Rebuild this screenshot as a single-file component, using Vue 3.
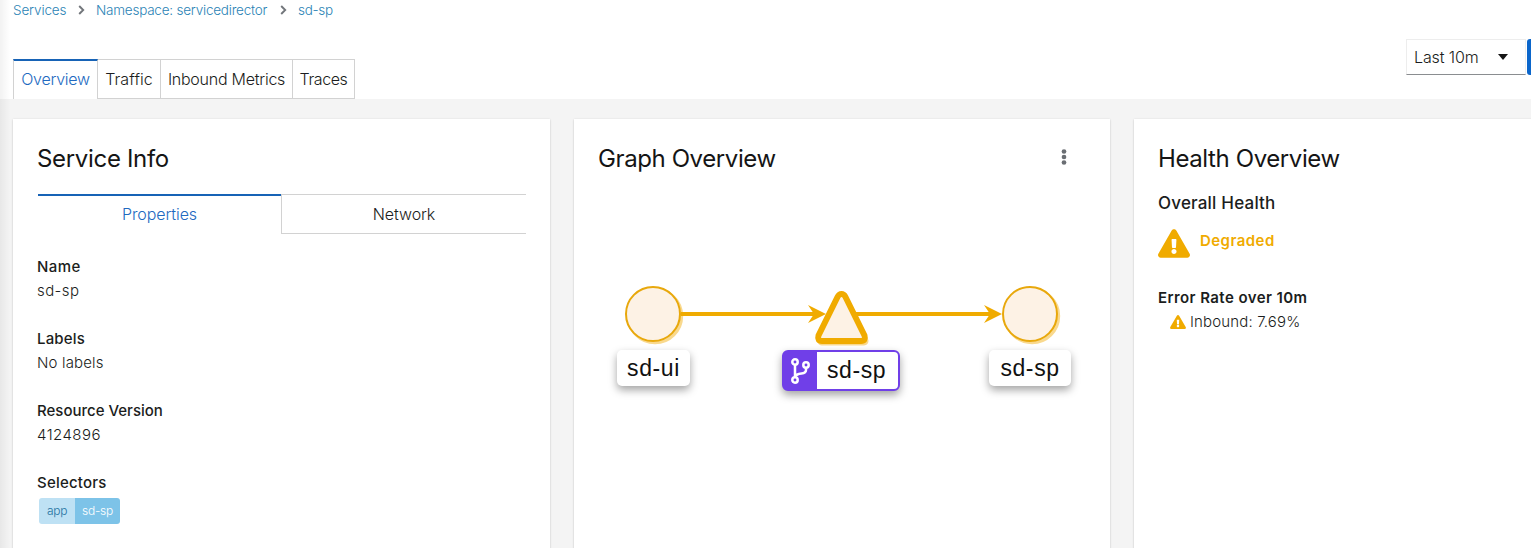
<script setup>
const properties = [
  { label: 'Name', value: 'sd-sp', id: 'name' },
  { label: 'Labels', value: 'No labels', id: 'labels' },
  { label: 'Resource Version', value: '4124896', id: 'version' },
]
const warning = 'M569.5 440C588 472 564.800 512 527.900 512H48.050c-36.940 0-59.999-40.055-41.577-71.987L246.423 23.985c18.467-32.009 64.720-31.951 83.154 0l239.940 416.027zM288 354c-25.405 0-46 20.595-46 46s20.595 46 46 46 46-20.595 46-46-20.595-46-46-46zm-43.673-165.346l7.418 136c.347 6.364 5.609 11.346 11.982 11.346h48.546c6.373 0 11.635-4.982 11.982-11.346l7.418-136c.375-6.874-5.098-12.654-11.982-12.654h-63.383c-6.884 0-12.356 5.780-11.981 12.654z'
</script>

<template>
  <div class="page">
    <header class="top">
      <nav class="crumbs">
        <a class="c1">Services</a>
        <svg class="chev" viewBox="0 0 7 10"><path d="M1.200 1 5.200 5 1.200 9" /></svg>
        <a class="c2">Namespace: servicedirector</a>
        <svg class="chev" viewBox="0 0 7 10"><path d="M1.200 1 5.200 5 1.200 9" /></svg>
        <a class="c3">sd-sp</a>
      </nav>
      <div class="bar">
        <div class="tabs">
          <button class="tab active w1"><span>Overview</span></button>
          <button class="tab w2"><span>Traffic</span></button>
          <button class="tab w3"><span>Inbound Metrics</span></button>
          <button class="tab w4"><span>Traces</span></button>
        </div>
        <div class="controls">
          <div class="select"><span>Last 10m</span><i class="caret"></i></div>
          <div class="refresh"></div>
        </div>
      </div>
    </header>
    <main class="cards">
      <section class="card info">
        <h2 class="t1">Service Info</h2>
        <div class="subtabs">
          <button class="sub on"><span>Properties</span></button>
          <button class="sub"><span>Network</span></button>
        </div>
        <dl>
          <div v-for="p in properties" :key="p.id" :class="['prop', p.id]">
            <dt>{{ p.label }}</dt>
            <dd>{{ p.value }}</dd>
          </div>
          <div class="prop selectors">
            <dt>Selectors</dt>
            <dd class="badge"><span class="key">app</span><span class="val">sd-sp</span></dd>
          </div>
        </dl>
      </section>

      <section class="card graph">
        <div class="head">
          <h2 class="t2">Graph Overview</h2>
          <svg class="kebab" viewBox="0 0 6 16"><circle cx="3" cy="2.500" r="2.350" /><circle cx="3" cy="8" r="2.350" /><circle cx="3" cy="13.500" r="2.350" /></svg>
        </div>
        <div class="canvas">
          <svg class="drawing" viewBox="574 270 536 140">
            <g class="shade">
              <circle cx="655" cy="316" r="27.200" />
              <path d="M843 298 864 341H822Z" />
              <circle cx="1032" cy="316" r="27.200" />
            </g>
            <path class="edge" d="M681 314H815M856 314H991" />
            <path class="arrow" d="M808 305 826 314 808 323 814 314Z" />
            <path class="arrow" d="M984 305 1002 314 984 323 990 314Z" />
            <circle class="node" cx="653" cy="314" r="27" />
            <path class="tri" d="M841.500 294Q844 294 845.500 297L864.500 335.500Q866 341 861 341H822Q817 341 818.500 335.500L837.500 297Q839 294 841.500 294Z" />
            <circle class="node" cx="1030" cy="314" r="27" />
          </svg>
          <div class="label ui"><span>sd-ui</span></div>
          <div class="label mid">
            <div class="branch">
              <svg viewBox="0 0 20 28">
                <circle cx="5" cy="5" r="2.700" /><circle cx="16" cy="8" r="2.700" /><circle cx="5" cy="23" r="2.700" />
                <path d="M5 8V20M16 11V13Q16 16 11.500 16.500Q6 17 5 20" />
              </svg>
            </div>
            <span>sd-sp</span>
          </div>
          <div class="label sp"><span>sd-sp</span></div>
        </div>
      </section>

      <section class="card health">
        <h2 class="t3">Health Overview</h2>
        <h3>Overall Health</h3>
        <div class="status">
          <svg viewBox="0 0 576 512"><path :d="warning" /></svg>
          <span>Degraded</span>
        </div>
        <h4>Error Rate over 10m</h4>
        <div class="rate">
          <svg viewBox="0 0 576 512"><path :d="warning" /></svg>
          <span>Inbound: 7.69%</span>
        </div>
      </section>
    </main>
  </div>
</template>

<style>
body { overflow: hidden; }
</style>

<style scoped>
* { box-sizing: border-box; }
.page { position: relative; height: 548px; width: 1531px; overflow: hidden; background: #f4f4f4; color: #1b1d20; font: 16px/24px Inter, "Open Sans", sans-serif; font-weight: 350; white-space: nowrap; display: flex; flex-direction: column; }
.page::before { content: ""; position: absolute; z-index: 2; left: 0; top: 0; width: 10px; height: 548px; background: linear-gradient(90deg, rgba(0,0,0,.05), transparent); }
.top { height: 99px; background: #fff; padding-left: 13px; flex: none; }
.crumbs { display: flex; align-items: center; height: 20px; margin-bottom: 1px; font-size: 13.500px; line-height: 20px; color: #2b83b5; }
.crumbs a { flex: none; }
.c1 { width: 65px; letter-spacing: -.13px; }
.c2 { width: 184px; letter-spacing: -.22px; }
.c3 { letter-spacing: -.3px; }
.chev { width: 7px; height: 10px; margin-right: 11px; fill: none; stroke: #72767b; stroke-width: 1.9; flex: none; }
.c2 + .chev { margin-left: 0; }
.bar { display: flex; justify-content: space-between; height: 78px; }
.tabs { display: flex; margin-top: 38px; height: 40px; }
button { font: inherit; color: inherit; background: #fff; padding: 0; border: 0; }
.tab { height: 40px; border: 1px solid #d2d2d2; border-left-width: 0; }
.tab.active { border-top: 2px solid #1763b6; border-left-width: 1px; border-bottom: 0; border-right: 1px solid #d2d2d2; padding-bottom: 2px; color: #2169bf; }
.w1 { width: 85px; letter-spacing: -.25px; }
.w2 { width: 63px; letter-spacing: .1px; }
.w3 { width: 132px; letter-spacing: -.25px; }
.w4 { width: 62px; letter-spacing: -.4px; }
.controls { display: flex; margin-top: 18px; height: 37px; }
.select { width: 120px; height: 36px; border: 1px solid #ededed; border-bottom-color: #8a8d90; padding: 0 17px 0 7px; display: flex; align-items: center; justify-content: space-between; letter-spacing: -.12px; }
.caret { border: 5.500px solid transparent; border-top: 6px solid #151515; border-bottom: 0; }
.refresh { width: 4px; height: 36px; margin-left: 1px; border-radius: 3px 0 0 3px; background: #0b66cb; }
.cards { padding: 20px 0 0 13px; display: flex; gap: 24px; flex: 1; }
.card { background: #fff; box-shadow: 0 1px 2px rgba(3,3,3,.14), 0 0 2px rgba(3,3,3,.08); padding: 24px; flex: none; }
.info { width: 537px; }
.graph { width: 536px; padding: 24px 0; }
.health { width: 537px; }
h2, h3, h4, dl, dt, dd { margin: 0; font-weight: 500; }
h2 { font-size: 24px; line-height: 31px; font-weight: 420; color: #151515; letter-spacing: -.4px; }
.t1 { letter-spacing: -.32px; }
.subtabs { display: flex; margin: 20px 0 21px 1px; height: 40px; }
.sub { flex: 1; border: solid #d2d2d2; border-width: 1px 0 1px 1px; letter-spacing: -.1px; }
.sub.on { flex: none; width: 243px; border: 0; border-top: 2px solid #1763b6; padding-bottom: 2px; color: #2169bf; }
.prop { height: 72px; font-size: 15px; }
.name { letter-spacing: .4px; }
.labels { letter-spacing: .16px; }
.version dd { letter-spacing: .45px; }
.selectors dt { letter-spacing: .2px; }
dd { font-weight: 350; }
dd.badge { display: flex; width: 81px; height: 26px; margin: 3px 0 0 2px; border-radius: 3px; overflow: hidden; font-size: 12px; line-height: 26px; text-align: center; letter-spacing: -.3px; }
.key { width: 36px; background: #bee1f4; color: #2473a0; }
.val { width: 45px; background: #7dc3e8; color: #fff; }
.head { display: flex; justify-content: space-between; padding: 0 43px 0 24px; }
.kebab { width: 6px; height: 16px; margin-top: 6px; fill: #6a6e73; }
.canvas { position: relative; height: 140px; margin-top: 96px; }
.drawing { display: block; width: 536px; height: 140px; }
.shade { fill: #f9d98e; stroke: #f9d98e; stroke-width: 2; }
.shade path { stroke-width: 9; stroke-linejoin: round; }
.edge { fill: none; stroke: #f0ab00; stroke-width: 4; }
.arrow { fill: #f0ab00; }
.node { fill: #fdf2e5; stroke: #e8a80c; stroke-width: 2; }
.tri { fill: #fdf2e5; stroke: #f0ab00; stroke-width: 6; }
.label { position: absolute; top: 80px; height: 36px; border-radius: 5px; background: #fff; box-shadow: 0 4px 9px rgba(0,0,0,.36); display: flex; align-items: center; justify-content: center; font: 23px/36px "Liberation Sans", sans-serif; letter-spacing: .6px; color: #111; }
.ui { left: 43px; width: 73px; }
.sp { left: 415px; width: 82px; }
.mid { left: 208px; width: 118px; height: 41px; border: 2px solid #703fe8; border-radius: 6px; justify-content: flex-start; padding-bottom: 1px; }
.branch { width: 33px; height: 37px; background: #703fe8; display: flex; align-items: center; padding-left: 6px; margin: 0 10px -1px 0; }
.branch svg { width: 20px; height: 28px; fill: none; stroke: #fff; stroke-width: 2.500; }
h3 { margin-top: 16px; font-size: 17px; line-height: 26px; letter-spacing: .2px; }
.status { display: flex; margin-top: 13px; height: 29px; color: #f0ab00; font-weight: 600; font-size: 15px; letter-spacing: .45px; }
.status svg { width: 32px; height: 29px; fill: #f0ab00; margin-right: 10px; }
h4 { margin-top: 28px; font-size: 15px; font-weight: 600; letter-spacing: .42px; }
.rate { display: flex; align-items: center; padding-left: 12px; font-size: 15px; letter-spacing: .15px; }
.rate svg { width: 16px; height: 14px; fill: #f0ab00; margin-right: 4px; }
</style>
